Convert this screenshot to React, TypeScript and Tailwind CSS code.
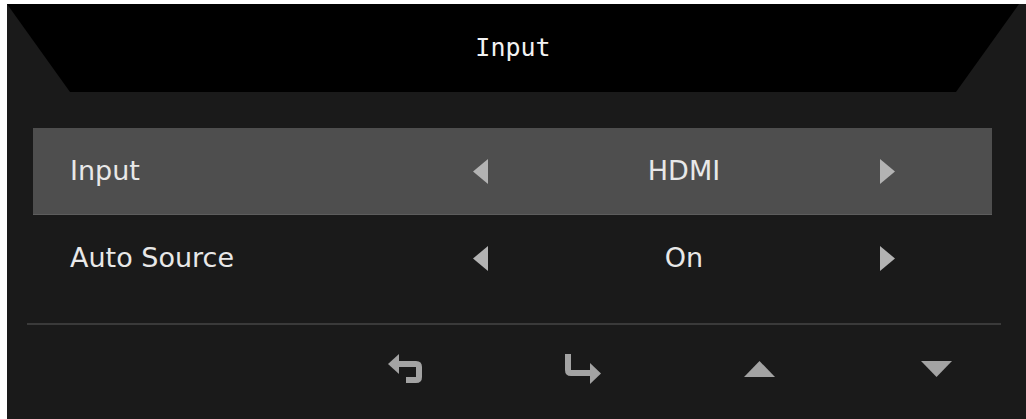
import React from "react";

const rows = [
  { label: "Input", value: "HDMI", active: true },
  { label: "Auto Source", value: "On", active: false },
];

const ArrowLeft = () => (
  <svg width="15" height="25" viewBox="0 0 15 25" className="shrink-0">
    <polygon points="15,0 0,12.5 15,25" fill="#b3b3b3" />
  </svg>
);

const ArrowRight = () => (
  <svg width="15" height="25" viewBox="0 0 15 25" className="shrink-0">
    <polygon points="0,0 15,12.5 0,25" fill="#b3b3b3" />
  </svg>
);

const BackIcon = () => (
  <svg width="36" height="30" viewBox="0 0 36 30">
    <polygon points="0,10 11,0 11,20" fill="#a3a3a3" />
    <path
      d="M9 10 H28 Q31 10 31 13 V23 Q31 26 28 26 H18"
      fill="none"
      stroke="#a3a3a3"
      strokeWidth="6"
    />
  </svg>
);

const EnterIcon = () => (
  <svg width="36" height="31" viewBox="0 0 36 31">
    <path
      d="M3 0 V16 Q3 19 6 19 H27"
      fill="none"
      stroke="#a3a3a3"
      strokeWidth="6"
    />
    <polygon points="25,9 36,19.5 25,30" fill="#a3a3a3" />
  </svg>
);

const UpIcon = () => (
  <svg width="31" height="16" viewBox="0 0 31 16">
    <polygon points="15.5,0 31,16 0,16" fill="#a3a3a3" />
  </svg>
);

const DownIcon = () => (
  <svg width="31" height="16" viewBox="0 0 31 16">
    <polygon points="0,0 31,0 15.5,16" fill="#a3a3a3" />
  </svg>
);

export default function App() {
  return (
    <div className="flex h-[419px] w-[1026px] flex-col bg-white pl-[7px] pt-[4px]">
      <div className="flex flex-1 flex-col bg-[#1a1a1a]">
        {/* title bar */}
        <div className="mr-[7px] flex h-[88px] items-center justify-center bg-black [clip-path:polygon(0_0,100%_0,calc(100%-63px)_100%,63px_100%)]">
          <span className="font-['DejaVu_Sans_Mono',monospace] text-[25px] text-[#f2f2f2]">
            Input
          </span>
        </div>

        <div className="ml-[26px] mt-[36px] flex w-[959px] flex-col">
          {rows.map((row) => (
            <div
              key={row.label}
              className={
                row.active
                  ? "flex h-[87px] items-center border-b border-[#5d5d5d] bg-[#4e4e4e] pl-[37px]"
                  : "flex h-[87px] items-center pl-[37px]"
              }
            >
              <span className="w-[403px] font-['DejaVu_Sans',sans-serif] text-[27px] text-[#e8e8e8]">
                {row.label}
              </span>
              <ArrowLeft />
              <span className="w-[392px] text-center font-['DejaVu_Sans',sans-serif] text-[27px] text-[#e8e8e8]">
                {row.value}
              </span>
              <ArrowRight />
            </div>
          ))}
        </div>

        <div className="ml-[20px] mt-[21px] h-[2px] w-[974px] bg-[#3a3a3a]" />

        <div className="flex flex-1 items-center pb-[6px] pl-[310px]">
          <div className="flex w-[177px] justify-center">
            <BackIcon />
          </div>
          <div className="flex w-[177px] justify-center">
            <EnterIcon />
          </div>
          <div className="flex w-[177px] justify-center">
            <UpIcon />
          </div>
          <div className="flex w-[177px] justify-center">
            <DownIcon />
          </div>
        </div>
      </div>
    </div>
  );
}
